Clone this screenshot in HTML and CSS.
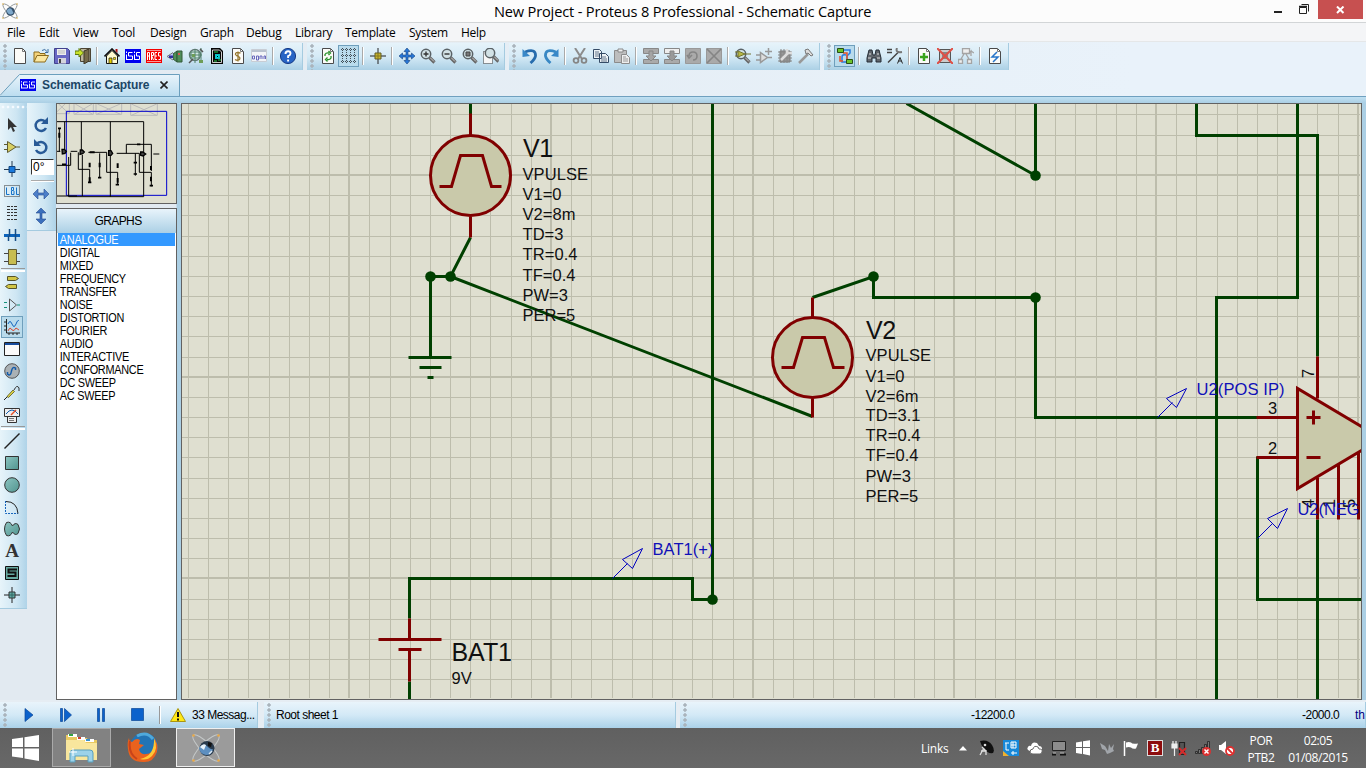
FILE: index.html
```html
<!DOCTYPE html>
<html lang="en">
<head>
<meta charset="utf-8">
<title>New Project - Proteus 8 Professional - Schematic Capture</title>
<link rel="stylesheet" href="styles.css">
</head>
<body>
<svg class="defs" width="0" height="0">
  <defs>
    <linearGradient id="tabg" x1="0" y1="0" x2="0" y2="1"><stop offset="0" stop-color="#e9f4fb"/><stop offset="1" stop-color="#b8dbef"/></linearGradient>
    <linearGradient id="teal" x1="0" y1="0" x2="1" y2="1"><stop offset="0" stop-color="#8cc5c1"/><stop offset="1" stop-color="#51948f"/></linearGradient>
    <symbol id="page" viewBox="0 0 16 16"><path d="M2.500.5h8l3 3v12h-11z" fill="#fbfbf8" stroke="#4a4a4a"/><path d="M10.500.5v3h3" fill="none" stroke="#777"/></symbol>
    <symbol id="isis" viewBox="0 0 16 14" preserveAspectRatio="none"><path d="M0 0h16v14H0z" fill="#0000f0"/><path d="M1.500 5.500v5.500M1.500 2.500v1.500M7.500 3.500H3.500v3.500H7.500v3.500H1.500M9.500 5.500v5.500M9.500 2.500v1.500M15 3.500h-3.500v3.500H14.500v3.500H9.500" fill="none" stroke="#fff"/></symbol>
    <symbol id="lens" viewBox="0 0 16 16"><path d="M9.500 9.500L14.500 14.500" stroke="#666" stroke-width="3.200"/><path d="M10 9.500L14 13.500" stroke="#ccc"/><circle cx="6" cy="6" r="4.700" fill="#d2e2e6" stroke="#5a6266" stroke-width="1.500"/></symbol>
    <symbol id="atom" viewBox="0 0 28 28"><g fill="none" stroke="#c4c8c8" stroke-width="1"><ellipse cx="14" cy="14" rx="18" ry="5" transform="rotate(45 14 14)"/><ellipse cx="14" cy="14" rx="18" ry="5" transform="rotate(-45 14 14)"/></g><circle cx="15" cy="14.500" r="7.500" fill="#293a4c"/><path d="M7 14q4-6 8-2t6 3q-1 6-7 6-6-1-7-7" fill="#5d8fc0"/><path d="M8 13q3-4 6-2l-2 5z" fill="#e9f3fa"/><path d="M16 8l4 1-1 4-3-1z" fill="#111"/><path d="M17 20l3-3" stroke="#dce8f2" stroke-width="1.500"/><g fill="#e9a743"><circle cx="1.500" cy="1.500" r="1.300"/><circle cx="26.500" cy="1.500" r="1.300"/><circle cx="1.500" cy="26.500" r="1.300"/><circle cx="26.500" cy="26.500" r="1.300"/></g></symbol>
  </defs>
</svg>
<div class="window">
  <header class="titlebar">
    <svg class="appicon" width="16" height="16" viewBox="0 0 16 16"><g fill="none" stroke="#8d9396" stroke-width=".9"><ellipse cx="8" cy="8" rx="9.500" ry="3" transform="rotate(45 8 8)"/><ellipse cx="8" cy="8" rx="9.500" ry="3" transform="rotate(-45 8 8)"/></g><circle cx="8.500" cy="8.500" r="4.300" fill="#35506b"/><path d="M4.500 8q2-4 5-2l2 4q-4 4-7-2" fill="#7fa9cc"/><path d="M0 1h2M14 1h2M0 15h2M14 15h2" stroke="#d9b052"/></svg>
    <h1>New Project - Proteus 8 Professional - Schematic Capture</h1>
    <div class="winbtns">
      <svg width="44" height="20"><path d="M0 11h8v2H0z" fill="#222"/><path d="M27.500 4.500h7v7M25.500 7.500h7v6h-7z" fill="none" stroke="#222"/><path d="M25 6.500h8" stroke="#222" stroke-width="1.500"/></svg>
      <div class="close"><svg width="9" height="8"><path d="M1 .5l6.500 6.500M7.500.5L1 7" stroke="#fff" stroke-width="2"/></svg></div>
    </div>
  </header>
  <nav class="menu"><span>File</span><span>Edit</span><span>View</span><span>Tool</span><span>Design</span><span>Graph</span><span>Debug</span><span>Library</span><span>Template</span><span>System</span><span>Help</span></nav>

  <div class="toolbars">
    <div class="group first">
      <b><svg viewBox="0 0 16 16"><use href="#page"/></svg></b>
      <b><svg viewBox="0 0 16 16"><path d="M1 14V4h5l1 1.500h5V8" fill="#f4d37a" stroke="#8b6a1c"/><path d="M1 14l3-6.500h11.500L12 14z" fill="#fbe7a0" stroke="#8b6a1c"/><path d="M9 2.500q3-2.500 5 1M15 1v3.500h-3" fill="none" stroke="#3c6ca0"/></svg></b>
      <b><svg viewBox="0 0 16 16"><path d="M.5.5h13l2 2v13H.5z" fill="#6868c4" stroke="#42428e"/><path d="M3 1h9v6H3z" fill="#eee"/><path d="M4 10h8v5.500H4z" fill="#d5d5dd"/><path d="M5 11h2v4H5z" fill="#444"/><path d="M4 3h7M4 5h7" stroke="#bbb"/></svg></b>
      <b><svg viewBox="0 0 16 16"><path d="M5.500.5h10v13h-10z" fill="#bdb7a0" stroke="#4c4535"/><path d="M9 3l5-2v12l-5 3z" fill="#74694a" stroke="#3d3728"/><path d="M0 3h4V.5L8.500 5 4 9V6.500H0z" fill="#c8e22b" stroke="#5f7a11"/></svg></b>
      <i></i>
      <b><svg viewBox="0 0 16 16"><path d="M2.500 8v7.500h11V8L8 2.500z" fill="#fffbd0" stroke="#111"/><path d="M.5 8.500L8 1l7.500 7.500" fill="none" stroke="#111" stroke-width="1.600"/><path d="M11.500 1h2v4l-2-2z" fill="#b01010"/><path d="M5 10h3v5.500H5z" fill="#e5d000" stroke="#111" stroke-width=".7"/><path d="M9.500 9.500h2v2h-2z" fill="#ed0" stroke="#111" stroke-width=".5"/></svg></b>
      <b><svg viewBox="0 0 16 16"><use href="#isis" y="1" width="16" height="14"/></svg></b>
      <b><svg viewBox="0 0 16 16"><path d="M0 1h16v14H0z" fill="#f40000"/><path d="M1.500 12V4.500h2V12M1.500 8h2M5.500 12V4.500h2v3h-2l2 4.500M11 4.500H9v7h2M9 8h2M14.500 4.500h-2v3.500h2v3.500h-2" fill="none" stroke="#fff"/><path d="M1 2.500h14M1 13.500h14" stroke="#fff" stroke-width=".6"/></svg></b>
      <b><svg viewBox="0 0 16 16"><path d="M6 6l4-3v11l-4-3z" fill="#508f58" stroke="#315939"/><path d="M10 3h5v11h-5z" fill="#4f8d59" stroke="#325b38"/><path d="M11 5h2v2h-2z" fill="#d55"/><path d="M6 4.500L0 8.500 6 12" fill="#c0c8ff" stroke="#777"/><path d="M2 7.500h4v2.500H2z" fill="#3030a0"/></svg></b>
      <b><svg viewBox="0 0 16 16"><circle cx="7" cy="7" r="5.500" fill="#d4e9e5" stroke="#607672" stroke-width="1.400"/><path d="M7 1v14M1 7h13M13 0v15M3 4h8v6H3z" fill="none" stroke="#51826c"/><path d="M4 6h3v3H4zM11 12h4v3h-4z" fill="#6d9d57"/><path d="M1 15l4-4M12 1l3 3" stroke="#555" stroke-width="1.500"/></svg></b>
      <b><svg viewBox="0 0 16 16"><path d="M2 0h9l3 3v13H2z" fill="#050505"/><path d="M3.500 2v12.500h9V4l-2-2z" fill="none" stroke="#fff" stroke-width=".8"/><path d="M5 4h4M9 12h3M5 13h3" stroke="#28d34f"/><path d="M6 6h5v5H6z" fill="#12bbc4"/><path d="M7.500 7.500h2v2h-2z" fill="#000" stroke="#0dd"/></svg></b>
      <b><svg viewBox="0 0 16 16"><use href="#page"/><path d="M10.500 5Q5 3.500 5.500 6.500q1 1.500 3 2 2 1 1 3-2 1.500-4.500 0M8 3.500v10" stroke="#987a31" fill="none" stroke-width="1.300"/></svg></b>
      <b><svg viewBox="0 0 16 16"><path d="M.5 1.500h15v12H.5z" fill="#f2f4f7" stroke="#c8cdd4"/><path d="M1 2h14v2H1z" fill="#b9c2cf"/><path d="M1.500 8h2v3h-2zM5.500 8h2v4h-2zM9 11V8h2v3M13 11V8h1.500v3" fill="none" stroke="#6969bd"/></svg></b>
      <i></i>
      <b><svg viewBox="0 0 16 16"><circle cx="8" cy="8" r="7.600" fill="#2764c5" stroke="#173b86"/><path d="M5.500 6q0-2.700 2.600-2.700 2.400 0 2.400 2.200 0 1.600-2.400 2.700V10M8.100 11.500v2" fill="none" stroke="#fff" stroke-width="1.900"/></svg></b>
    </div>
    <div class="group">
      <b><svg viewBox="0 0 16 16"><use href="#page"/><path d="M5 8V6.500q1-2 4-1.500M8.500 3l2 2-2 2M11 8v2q-1 2-4 1.500M7.500 9.500l-2 2 2 2" fill="none" stroke="#29922c" stroke-width="1.300"/></svg></b>
      <b class="on"><svg viewBox="0 0 16 16"><path d="M1.500 0v16M5.500 0v16M9.500 0v16M13.500 0v16M0 1.500h16M0 7.500h16M0 13.500h16" stroke="#424d55" stroke-dasharray="1 1"/></svg></b><i></i>
      <b><svg viewBox="0 0 16 16"><path d="M8 0v16M0 8h16" stroke="#222"/><path d="M5 5h6v6H5z" fill="#c9b72c" stroke="#625c25"/><path d="M8 5v6M5 8h6" stroke="#857823"/></svg></b><i></i>
      <b><svg viewBox="0 0 16 16"><path d="M8 0l3 3.500H9V7h3.500V5L16 8l-3.500 3V9H9v3.500h2L8 16l-3-3.500h2V9H3.500v2L0 8l3.500-3v2H7V3.500H5z" fill="#2877d7" stroke="#16427d" stroke-width=".6"/></svg></b>
      <b><svg viewBox="0 0 16 16"><use href="#lens"/><path d="M3.500 6h5M6 3.500v5" stroke="#333" stroke-width="1.400"/></svg></b>
      <b><svg viewBox="0 0 16 16"><use href="#lens"/><path d="M3.500 6h5" stroke="#333" stroke-width="1.400"/></svg></b>
      <b><svg viewBox="0 0 16 16"><use href="#lens"/><path d="M4 4h4v4H4z" fill="#777" stroke="#444"/></svg></b>
      <b><svg viewBox="0 0 16 16"><path d="M.5 3.500h9v12h-9z" fill="#f7f7f7" stroke="#333" stroke-dasharray="1 1"/><use href="#lens" x="1" y="-1" width="16" height="16"/></svg></b>
    </div>
    <div class="group">
      <b><svg viewBox="0 0 16 16"><path d="M3 4q11-4 10.500 4-.5 3-5 7" fill="none" stroke="#276cad" stroke-width="2.800"/><path d="M.5 1v8L8 8z" fill="#3988c8"/></svg></b>
      <b><svg viewBox="0 0 16 16"><path d="M13 4Q2 0 2.500 8q.5 3 5 7" fill="none" stroke="#3988c4" stroke-width="2.800"/><path d="M15.500 1v8L8 8z" fill="#3988c8"/></svg></b><i></i>
      <b><svg viewBox="0 0 16 16"><path d="M3 0l7 11M13 0L6 11" stroke="#8c8c8c" stroke-width="2"/><circle cx="4" cy="12.500" r="2.400" fill="none" stroke="#858585" stroke-width="1.800"/><circle cx="12" cy="12.500" r="2.400" fill="none" stroke="#858585" stroke-width="1.800"/></svg></b>
      <b><svg viewBox="0 0 16 16"><path d="M.5 1.500h6l2 2v7h-8zM6.500 5.500h6l3 3v6h-9z" fill="#edf2f5" stroke="#344b66"/><path d="M2 4h4M2 6h4M2 8h4M8 9h5M8 11h6M8 13h6" stroke="#67798d"/></svg></b>
      <b><svg viewBox="0 0 16 16"><path d="M.5 2.500h12v12H.5z" fill="#bdbdbd" stroke="#8b8b8b"/><path d="M4 1h5v3H4z" fill="#eee" stroke="#888"/><path d="M7.500 6.500h5l3 3v6h-8z" fill="#eee" stroke="#8c8c8c"/><path d="M9 9h3M9 11h5M9 13h5" stroke="#999"/></svg></b><i></i>
      <b><svg viewBox="0 0 16 16"><path d="M.5.500h15v5H.5zM.5 11.500h15v4H.5z" fill="#aaa" stroke="#888"/><path d="M6 3h4v5h3l-5 5-5-5h3z" fill="#a5a5a5" stroke="#888"/></svg></b>
      <b><svg viewBox="0 0 16 16"><path d="M.5.500h15v5H.5z" fill="#eee" stroke="#888"/><path d="M.5 11.500h15v4H.5z" fill="#aaa" stroke="#888"/><path d="M6 3h4v5h3l-5 5-5-5h3z" fill="#999" stroke="#888"/></svg></b>
      <b><svg viewBox="0 0 16 16"><path d="M.5.500h15v15H.5z" fill="#aaa" stroke="#999"/><path d="M4 8q0-4 4-4t4 4-4 4M2 7l2 3 3-3" fill="none" stroke="#858585" stroke-width="1.600"/></svg></b>
      <b><svg viewBox="0 0 16 16"><path d="M.5.500h15v15H.5z" fill="#aaa" stroke="#999"/><path d="M1 1l14 14M15 1L1 15" stroke="#858585" stroke-width="1.600"/></svg></b><i></i>
      <b><svg viewBox="0 0 16 16"><use href="#lens"/><path d="M3 3l7 3-7 3zM0 4h3M0 8h3M10 6h6" fill="#b9b944" stroke="#72752f"/></svg></b>
      <b><svg viewBox="0 0 16 16"><path d="M4.500 4.500l7 5-7 5zM0 7h4M0 12h4M11 9.500h5M12.500 0v7M9 3.500h7" fill="#ddd" stroke="#999" stroke-width="1.500"/></svg></b>
      <b><svg viewBox="0 0 16 16"><path d="M3 3h10v11H3z" fill="#999" stroke="#777"/><path d="M4 1v14M7 1v14M10 1v14M1 4h14M1 7h14M1 10h14M1 13h14" stroke="#888"/><path d="M4 12l8-8M10 1v4h5" stroke="#ddd" stroke-width="2.500" fill="none"/></svg></b>
      <b><svg viewBox="0 0 16 16"><path d="M1 15L10 6" stroke="#999" stroke-width="2.500"/><path d="M7 2l3-1 5 6-2 1-3-3-2 1z" fill="#ddd" stroke="#777"/></svg></b>
    </div>
    <div class="group last">
      <b class="on"><svg viewBox="0 0 16 16"><path d="M7 2h6v3L10 8v6H5V9q0-3 4-2" fill="none" stroke="#287bdc" stroke-width="1.500"/><path d="M6 5h4v8h3M3 8v5h3" fill="none" stroke="#e85128" stroke-width="1.500"/><path d="M.5.500h6v4h-6zM9.500 11.500h6v4h-6z" fill="#6bc52a" stroke="#294d15"/></svg></b><i></i>
      <b><svg viewBox="0 0 16 16"><path d="M3 2h3l1 5h2l1-5h3l2 8v4h-5v-4H6v4H1v-4z" fill="#5f656c" stroke="#252d36"/><path d="M3 6h2M11 6h2M2 10h3M11 10h3" stroke="#ddd"/></svg></b>
      <b><svg viewBox="0 0 16 16"><path d="M0 1.500h5M0 4.500h5M1 14.500L11 4.500" stroke="#444" stroke-width="1.500"/><path d="M10 0q-2 5 5 4" fill="none" stroke="#777" stroke-width="2"/><path d="M10.500 15.500l2.500-6 2.500 6M11.500 13h3" fill="none" stroke="#222"/></svg></b><i></i>
      <b><svg viewBox="0 0 16 16"><use href="#page"/><path d="M8 5v8M4 9h8" stroke="#3ba51e" stroke-width="2.500"/></svg></b>
      <b><svg viewBox="0 0 16 16"><path d="M2.500 1.500h11v13h-11z" fill="#ccc" stroke="#555"/><path d="M5 4h6v7H5z" fill="#888"/><path d="M0 0l16 16M16 0L0 16" stroke="#df5047" stroke-width="2"/></svg></b>
      <b><svg viewBox="0 0 16 16"><path d="M4.500.5h7v5h-7zM.5 11.500h4v4h-4zM9.500 11.500h4v4h-4zM3 11l3-5M11 11L8 6M13 8V3l-2 2M13 3l3 2" fill="#eee" stroke="#a4a4a4" stroke-width="1.300"/></svg></b><i></i>
      <b><svg viewBox="0 0 16 16"><use href="#page"/><path d="M10 4L5 9h6l-5 5" fill="none" stroke="#2675c9" stroke-width="1.500"/></svg></b>
    </div>
  </div>

  <div class="tabs">
    <div class="tab">
      <svg class="tabshape" width="181" height="24"><path d="M0 22.500L19.500.500H179.500V24H0z" fill="url(#tabg)"/><path d="M0 21.500L19.500.500H179.500V22" fill="none" stroke="#6b9fbd"/></svg>
      <div class="tablabel"><svg width="16" height="12"><use href="#isis" width="16" height="12"/></svg><span>Schematic Capture</span><svg width="8" height="8"><path d="M.5.5l7 7M7.500.5l-7 7" stroke="#222" stroke-width="1.600"/></svg></div>
    </div>
  </div>
  <div class="band"></div>

  <main class="work">
    <aside class="tools">
      <b><svg viewBox="0 0 16 16"><path d="M4 1v12l3-3 2 5 2-1-2-4h4z" fill="#333"/></svg></b>
      <b><svg viewBox="0 0 16 16"><path d="M3.500 2.500L12 8l-8.500 5.500zM0 5.500h3M0 10.500h3M12 8h4" fill="#d8cf62" stroke="#605c32"/></svg></b>
      <b><svg viewBox="0 0 16 16"><path d="M8 0v16M0 8.500h16" stroke="#233a50"/><path d="M5 5.500h6v6H5z" fill="#1879dc" stroke="#12447d"/></svg></b>
      <b><svg viewBox="0 0 16 16"><path d="M.5 2.500h15v11H.5z" fill="none" stroke="#333" stroke-dasharray="1 1"/><path d="M2.500 4.500v7H5.500M7.500 4.500h2v3h-2zM7.500 8v3.500h2.500V8M12.500 4.500v7H15" fill="none" stroke="#1673c8"/></svg></b>
      <b><svg viewBox="0 0 16 16"><path d="M3 1.500h11M3 4.500h11M3 7.500h11M3 10.500h11M3 14.500h11" stroke="#333" stroke-dasharray="3 1 2 1"/></svg></b>
      <b><svg viewBox="0 0 16 16"><path d="M0 8.500h16" stroke="#0c63bb" stroke-width="3"/><path d="M5.500 2v7M11.500 2v12M4.500 9v5" stroke="#164c83" stroke-width="1.500"/></svg></b>
      <b><svg viewBox="0 0 16 16"><path d="M0 4.500h4M0 12.500h4M12 4.500h4M12 12.500h4" stroke="#444"/><path d="M4.500.5h8v15h-8z" fill="#c7bd50" stroke="#5e5a36"/></svg></b>
      <i></i>
      <b><svg viewBox="0 0 16 16"><path d="M3.500 1.500h8l3 2-3 2h-8zM12.500 9.500h-8l-3 2 3 2h8z" fill="#d1c545" stroke="#56532a"/></svg></b>
      <b><svg viewBox="0 0 16 16"><path d="M0 5.500h3M0 10.500h3M13 8h3" stroke="#159078"/><path d="M5.500 2v12l7-6z" fill="none" stroke="#555"/></svg></b>
      <b class="on"><svg viewBox="0 0 16 16"><path d="M2.500 0v14H16M0 3h3M0 7h3M0 11h3M5 14v2M9 14v2M13 14v2" stroke="#222" fill="none"/><path d="M4 5q2-5 4 0t4 0 3-3" stroke="#1264bd" fill="none"/><path d="M4 12q2-5 4-1 2 2 4-2l3 2" stroke="#d84a31" fill="none"/></svg></b>
      <b><svg viewBox="0 0 16 16"><path d="M.5 1.500h15v13H.5z" fill="#fafafa" stroke="#222"/><path d="M1 3h14" stroke="#164c9e" stroke-width="2"/></svg></b>
      <b><svg viewBox="0 0 16 16"><circle cx="8" cy="8" r="7.300" fill="#aab1b5" stroke="#555"/><path d="M3.500 9v2q3 3 4-3 1-5 4-3v2" fill="none" stroke="#135cab" stroke-width="1.500"/></svg></b>
      <b><svg viewBox="0 0 16 16"><path d="M0 15l4-4" stroke="#222"/><path d="M3 11.500L9 5l1.500 1.500L4.500 12.500z" fill="#ddd542" stroke="#56532a" stroke-width=".8"/><path d="M10 5q3-6 5-2v3" fill="none" stroke="#333"/></svg></b>
      <b><svg viewBox="0 0 16 16"><path d="M.5 1.500h15v8H.5zM3.500 9.500h9v6h-9z" fill="#eee" stroke="#333"/><path d="M2 7q6-8 12 0" fill="none" stroke="#1361b0"/><path d="M7 8l5-5" stroke="#e55029" stroke-width="1.500"/><path d="M5 11.500h5M5 13.500h5" stroke="#777"/></svg></b>
      <i></i>
      <b><svg viewBox="0 0 16 16"><path d="M.5 15.500l15-15" stroke="#222" stroke-width="1.400"/></svg></b>
      <b><svg viewBox="0 0 16 16"><path d="M1.500 1.500h13v13h-13z" fill="url(#teal)" stroke="#333"/></svg></b>
      <b><svg viewBox="0 0 16 16"><circle cx="8" cy="8" r="7.300" fill="url(#teal)" stroke="#333"/></svg></b>
      <b><svg viewBox="0 0 16 16"><path d="M1.500 2v12.500H14" fill="none" stroke="#1665bd" stroke-dasharray="2 1"/><path d="M2 2.500q11 0 12 12" fill="none" stroke="#222"/></svg></b>
      <b><svg viewBox="0 0 16 16"><path d="M8.500 5q2.500-4 5.500-1.500 3 4.500 0 9-3 2.500-5.500-1.500-2 5-6 3.500-4-6.500 0-13 4-1.500 6 3.500z" fill="url(#teal)" stroke="#333"/></svg></b>
      <b class="letter">A</b>
      <b><svg viewBox="0 0 16 16"><path d="M1.500 1.500h13v13h-13z" fill="#66aaa1" stroke="#111"/><path d="M13 4.500H4.500v3H11.500v3.500H3.500" fill="none" stroke="#111" stroke-width="2"/></svg></b>
      <b><svg viewBox="0 0 16 16"><path d="M8 0v16M0 8h16" stroke="#222"/><path d="M5 5h6v6H5z" fill="#62aaa4" stroke="#333"/><path d="M8 5v6M5 8h6" stroke="#306762"/></svg></b>
    </aside>
    <aside class="rotate">
      <b><svg viewBox="0 0 16 16"><path d="M12 4.500A5.500 5.500 0 1 0 13 11" fill="none" stroke="#285a97" stroke-width="2.500"/><path d="M15 0v7H8z" fill="#285a97"/></svg></b>
      <b><svg viewBox="0 0 16 16"><path d="M4 4.500A5.500 5.500 0 1 1 3 11" fill="none" stroke="#285a97" stroke-width="2.500"/><path d="M1 0v7h7z" fill="#285a97"/></svg></b>
      <span class="angle">0°</span><i></i>
      <b class="h"><svg viewBox="0 0 16 16"><path d="M0 8l5-5v4h6V3l5 5-5 5V9H5v4z" fill="#4c7fc9" stroke="#274c91" stroke-width=".6"/></svg></b>
      <b><svg viewBox="0 0 16 16"><path d="M8 0l5 5H9v6h4l-5 5-5-5h4V5H3z" fill="#3b70bd" stroke="#274c91" stroke-width=".6"/></svg></b>
    </aside>
    <section class="side">
      <div class="overview">
        <svg width="119" height="99" viewBox="21 12 357 297" fill="none" stroke="#000" stroke-width="3">
          <g stroke="#bbb"><path d="M20 41h38V12M26 12l30 28M20 36l25-24M72 12v31h58V12M74 43l52-31M76 12l52 31M138 12v31h77V12M140 43l70-31M142 12l70 31M242 12v34h80V12M244 46l76-34M244 12l76 34"/></g>
          <path d="M49 34h301v252H49z" stroke="#00c"/>
          <path d="M21 65h260v225H56V171M21 288h60M21 196h41v-38M94 65v85M97 165v123M44 65v85M181 65v225M62 154h20M85 157v51h34v40M115 157h55v60h33v38M149 160v74M200 160h68v57h36v42M229 160v-27h75v80M256 160v67M310 162h18M21 154h10M28 85v70"/>
          <path d="M28 98v15M119 188v14M149 188v14M203 190v14M303 198v12M119 232v14M203 234v14M303 230v14M119 157h15" stroke-width="6"/>
          <path d="M36 148h7l6 6-4 6-8 2zM91 150h6l6 6-5 5-8 2zM176 152h7l5 8-5 6h-7zM272 156h6l9 6-8 6-7-2z" fill="#444" stroke-width="4"/>
          <path d="M114 247h10M144 233h10M197 254h10M251 222h10M299 257h10M24 85h9M261 133h10M36 193h12M251 188h10" stroke-width="5"/>
        </svg>
      </div>
      <div class="list"><h2>GRAPHS</h2>
        <ul><li class="sel">ANALOGUE</li><li>DIGITAL</li><li>MIXED</li><li>FREQUENCY</li><li>TRANSFER</li><li>NOISE</li><li>DISTORTION</li><li>FOURIER</li><li>AUDIO</li><li>INTERACTIVE</li><li>CONFORMANCE</li><li>DC SWEEP</li><li>AC SWEEP</li></ul>
      </div>
    </section>
    <section class="sheet">
      <svg width="1179" height="595" viewBox="182 104 1179 595">
        <g id="grid" class="grid"></g>
        <g transform="translate(.5 .5)">
          <g class="body"><circle cx="470" cy="175" r="40"/><circle cx="812" cy="357" r="40"/><path d="M1297 388v100l84-50z"/></g>
          <g class="wire">
            <path d="M470 103v11M470 237L450 276H430V357M408 357h43M419 367h22M427 377h6M450 276L812 416"/>
            <path d="M712 103V599H692V578H409V618M409 681v19"/>
            <path d="M812 297L873 276V297H1035V417H1257M906 103L1035 175V103"/>
            <path d="M1196 103V135H1317V356M1297 103V297H1216V700M1257 456V599H1362M1317 519V700"/>
          </g>
          <g class="part">
            <path d="M470 113v22M470 216v21M439 186h12L460 155h22L491 186h10M812 297v20M812 398v19M781 367h12L802 337h22L833 367h11"/>
            <path d="M409 618v21M378 639h63M398 649h23M409 649v32"/>
            <path d="M1317 356v42M1256 417h41M1256 457h41M1317 477v42M1338 464v55M1358 452v67M1306 417h14M1313 410v14M1306 457h14"/>
          </g>
          <g class="dots"><circle cx="430" cy="276" r="5.300"/><circle cx="450" cy="276" r="5.300"/><circle cx="873" cy="276" r="5.300"/><circle cx="1035" cy="297" r="5.300"/><circle cx="1035" cy="175" r="5.300"/><circle cx="712" cy="599" r="5.300"/></g>
          <path class="probe" d="M612 578l15-15M622 559l20-11-10 20zM1157 417l15-15M1166 398l20-10-10 19zM1257 538l15-15M1267 518l20-10-10 20z"/>
        </g>
        <g class="val">
          <text class="name" x="523" y="157">V1</text><text x="522.500" y="180" textLength="65.500">VPULSE</text><text x="522.500" y="200">V1=0</text><text x="522.500" y="220" textLength="53">V2=8m</text><text x="522.500" y="240" textLength="41">TD=3</text><text x="522.500" y="260" textLength="55">TR=0.4</text><text x="522.500" y="281" textLength="53">TF=0.4</text><text x="522.500" y="301">PW=3</text><text x="522.500" y="321">PER=5</text>
          <text class="name" x="866" y="339">V2</text><text x="865.500" y="361" textLength="65.500">VPULSE</text><text x="865.500" y="382">V1=0</text><text x="865.500" y="402" textLength="53">V2=6m</text><text x="865.500" y="421" textLength="55">TD=3.1</text><text x="865.500" y="441" textLength="55">TR=0.4</text><text x="865.500" y="461" textLength="53">TF=0.4</text><text x="865.500" y="482">PW=3</text><text x="865.500" y="502">PER=5</text>
          <text class="name" x="451.500" y="661" textLength="60">BAT1</text><text x="451.500" y="684">9V</text>
          <text x="1268" y="414">3</text><text x="1268" y="454">2</text>
          <text transform="translate(1314 378) rotate(-90)">7</text><text transform="translate(1314 508) rotate(-90)">4</text><text transform="translate(1335 508) rotate(-90)">1</text><text transform="translate(1355 508) rotate(-90)">5</text>
          <g class="net"><text x="652.500" y="555" textLength="61">BAT1(+)</text><text x="1196.500" y="395" textLength="88">U2(POS IP)</text><text x="1297.500" y="515" textLength="62">U2(NEG</text></g>
        </g>
      </svg>
    </section>
  </main>

  <div class="status">
    <div class="sg s1">
      <svg width="159" height="26"><g fill="#0b62cc" stroke="#0a4696" stroke-width=".7"><path d="M25 6.500v13l8-6.500zM60.500 6.500h2v13h-2zM64.500 6.500v13l7-6.500zM97.500 6.500h2v13h-2zM102.500 6.500h2v13h-2zM131.500 6.500h12v12h-12z"/></g></svg>
      <i></i>
      <svg class="warn" width="16" height="14"><path d="M8 .5L15.500 13.500H.5z" fill="#ffe817" stroke="#aa9612"/><path d="M8 4v5M8 10.500v2" stroke="#111" stroke-width="2"/></svg>
      <span>33 Messag...</span>
    </div>
    <div class="sg s2"><span>Root sheet 1</span></div>
    <div class="sg s3"><span class="cx">-12200.0</span><span class="cy">-2000.0</span><span class="th">th</span></div>
  </div>

  <footer class="taskbar">
    <div class="start"><svg width="27" height="26"><path d="M0 4l11-1.500V12H0zM12.500 2.300L27 0v12H12.500zM0 13.500h11V23L0 21.500zM12.500 13.500H27V26l-14.500-2.500z" fill="#fff"/></svg></div>
    <div class="task"><svg width="34" height="30"><path d="M1 2h10l2 3h9l1 2h9v20H1z" fill="#e9c961"/><path d="M3 1h9v3H3z" fill="#fff"/><path d="M4 1h4v2H4z" fill="#35a343"/><path d="M12 4h8v3h-8z" fill="#fff"/><path d="M13 4h3v2h-3z" fill="#d04530"/><path d="M20 6h9v3h-9z" fill="#fff"/><path d="M21 6h4v2h-4z" fill="#3b92cc"/><path d="M1 7h18l2 3h11v17H1z" fill="#f8e69d"/><path d="M5 29V20q0-3 3-3h17q3 0 3 3v9h-5v-6H10v6z" fill="#9cd2e9" stroke="#589fbd"/><path d="M8 15v8M4 19h8" stroke="#fff"/></svg></div>
    <div class="fox"><svg width="32" height="32"><circle cx="17" cy="15" r="14" fill="#2274b5"/><path d="M10 4q10-5 16 3" fill="none" stroke="#4fa9dc" stroke-width="3"/><path d="M2 6q0 3 3 4 4-5 8-2l-1 4 5 1-5 4q1 6 7 5 7 0 9-9 1-3-1-7 5 6 3 14-4 11-14 10Q2 30 1 17 0 10 2 6z" fill="#e9621e"/><path d="M27 6q5 11-2 18-5 5-12 3 15-3 14-21" fill="#ffc735"/><path d="M3 9q-2 12 7 18" stroke="#c9431a" stroke-width="2" fill="none"/></svg></div>
    <div class="task active"><svg width="28" height="28"><use href="#atom"/></svg></div>
    <div class="tray">
      <span class="links">Links</span>
      <svg class="up" width="8" height="5"><path d="M0 4.500L4 0l4 4.500z" fill="#fff"/></svg>
      <div class="icons">
        <svg viewBox="0 0 16 16"><path d="M1 1q8-2 12 4 3 5 1 8-5 1-9-4-3-4-4-8z" fill="#111"/><path d="M3 7l4 4M5 8l-4 7M7 10v5M2 11h5" fill="none" stroke="#ddd" stroke-width="1.300"/><circle cx="6" cy="5" r="1.300" fill="#ddd"/></svg>
        <svg viewBox="0 0 16 16"><path d="M0 0h16v16H0z" fill="#1688d9"/><path d="M2 3h4M3 3v7h3M8 2h5v6H8zM10 2v6M8 5h5M8 13h6M10 11v4" fill="none" stroke="#fff"/><path d="M0 11l6 5H0z" fill="#efb02c"/></svg>
        <svg viewBox="0 0 16 16"><path d="M3 11q-4-1-2-4 1-2 3-1 1-5 6-3l2 3q3 0 3 3 0 2-2 2z" fill="#fff"/><path d="M6 14q-3 0-3-2 0-3 3-3 1-4 5-2l1 2q4 0 3 3-.500 2-2 2z" fill="#fff" stroke="#666"/></svg>
        <svg viewBox="0 0 16 16"><path d="M1.500 1.500h13v9h-13z" fill="#8c8c8c" stroke="#222"/><path d="M1 14.500h4M9 14.500h6" stroke="#111" stroke-width="2"/><path d="M2 13h3M9 13h4" stroke="#bbb"/></svg>
        <svg viewBox="0 0 16 16"><path d="M1 2.500l6-1V7H1zM8 1.300l7-1V7H8zM1 8h6v6l-6-1zM8 8h7v7.500L8 14z" fill="#fff"/></svg>
        <svg viewBox="0 0 16 16"><path d="M1 3l5 3 3 5 1-7 2 4 3-4-1 5 1 2-4 2-3 1-2-4-3-1z" fill="#a1a5aa"/></svg>
        <svg viewBox="0 0 16 16"><path d="M1.500 1v15" stroke="#fff" stroke-width="1.500"/><path d="M3 2.500q3-1 5 0 1 2 7 1l-2 5q-3 1-5-1-2-1-5 0z" fill="#fff"/></svg>
        <div class="bicon">B</div>
        <svg viewBox="0 0 16 16"><path d="M1 4h5v4H1zM2 1v3M5 1v3M3.500 8v8" fill="#eee" stroke="#eee" stroke-width="1.200"/><path d="M8.500 2.500h5v12h-5z" fill="#555" stroke="#222" stroke-width="1.200"/><path d="M8 8l7 7M15 8l-7 7" stroke="#d42b2b" stroke-width="2"/></svg>
        <svg viewBox="0 0 16 16"><path d="M.5 11.500h2v2h-2zM3.500 9.500h2v4h-2zM6.500 7.500h2v6h-2zM9.500 4.500h2v9h-2zM12.500 1.500h2v12h-2z" fill="#777" stroke="#222" stroke-width=".8"/><circle cx="11.500" cy="11.500" r="4.500" fill="#dc3030"/><path d="M9.500 9.500l4 4M13.500 9.500l-4 4" stroke="#fff" stroke-width="1.500"/></svg>
        <svg viewBox="0 0 16 16"><path d="M0 5h2l5-4v13l-5-4H0z" fill="#fff"/><circle cx="11" cy="11" r="4" fill="#fff" stroke="#df3030" stroke-width="1.800"/><path d="M8 8l6 6" stroke="#df3030" stroke-width="1.800"/></svg>
      </div>
      <div class="lang"><span>POR</span><span>PTB2</span></div>
      <div class="clock"><span>02:05</span><span>01/08/2015</span></div>
    </div>
  </footer>
</div>
<script src="grid.js"></script>
</body>
</html>
```
FILE: styles.css
```css
*{box-sizing:border-box}
body{margin:0;overflow:hidden;font-family:"Liberation Sans",Arial,sans-serif;color:#000}
svg{display:block;flex:none}
b,h1,h2{font-weight:normal}
.defs{position:absolute}
.window{width:1366px;height:768px;display:flex;flex-direction:column;background:#e2eaf1}
.titlebar{height:23px;display:grid;grid-template-columns:494px 380px 1fr;background:#fcfcfc;border-bottom:1px solid #d2d5d7}
.appicon{margin:3px 0 0 2px}
.titlebar h1{margin:0;font:14.6px/23px "Open Sans",sans-serif;white-space:nowrap;letter-spacing:-.17px}
.winbtns{display:flex;margin-right:3px;justify-self:end}
.close{width:45px;height:19px;background:#c75050;display:flex;align-items:center;justify-content:center}
.menu{height:19px;background:#f4f5f7;border-bottom:1px solid #e5e7e8;padding-left:7px;display:grid;grid-template-columns:32px 34px 39px 38px 50px 46px 49px 50px 64px 52px auto;font:12px/19px "Open Sans",sans-serif;letter-spacing:-.25px}
.toolbars{height:29px;padding-top:1px;display:flex;gap:4px;background:linear-gradient(90deg,#e2eaf1,#e9f2fa 83%)}
.group{height:27px;display:flex;align-items:center;padding:0 3px 1px 10px;background:radial-gradient(circle at 5px 3px,#aab4bc 1.500px,transparent 1.800px) 0 0/10px 5px repeat-y,linear-gradient(#e6f3fa,#d5eaf6 50%,#abd0e5);border-right:1px solid #a5cbe0}
.group.first{padding-left:9px;padding-right:4px}
.group b,.tools b,.rotate b{display:flex;align-items:center;justify-content:center;flex:none}
.group b{width:21px;height:22px}
.group svg,.tools svg,.rotate svg{width:16px;height:16px}
.group i{width:8px;height:18px;background:linear-gradient(90deg,transparent 3px,#aaa 3px,#aaa 4px,#fff 4px,#fff 5px,transparent 5px)}
.group .on,.tools .on{background:#b9dbec;border:1px solid #6f9fbc}
.tabs{height:25px;padding-top:3px;background:linear-gradient(90deg,#e2eaf1,#e9f2fa 83%)}
.tab{display:grid;width:181px}
.tab>*{grid-area:1/1}
.tablabel{display:flex;align-items:center;height:22px;padding-left:20px;font-weight:bold;font-size:12px;color:#1b4666}
.tablabel span{width:118px;margin-left:6px;letter-spacing:-.08px}
.band{height:7px;background:linear-gradient(#bfe0f2,#abcfe4);border-top:1px solid #6fa0bf}
.work{height:597px;display:flex;background:linear-gradient(90deg,#e2eaf1 57px,#abcfe4 57px)}
.tools{width:27px;height:506px;padding:11px 2px 0 1px;background:radial-gradient(circle at 3px 4px,#f5faff 1.500px,transparent 1.600px) 0 0/5px 8px repeat-x,linear-gradient(90deg,#e7f4fa,#cee6f3 60%,#afd3e8);background-size:5px 8px,auto;border-bottom:1px solid #a5cbe0}
.tools b{height:22px;width:22px}
.tools i{display:block;height:4px;border-top:1px solid #999;border-bottom:2px solid #fff}
.tools .letter{font:bold 19px/22px "Liberation Serif",serif;color:#333}
.rotate{width:29px;height:128px;padding:11px 2px 0 4px;background:linear-gradient(90deg,#e7f4fa,#cee6f3 60%,#afd3e8);border-bottom:1px solid #a5cbe0}
.rotate b{height:22px;width:20px}
.rotate .h{margin-top:1px}
.angle{display:block;width:23px;height:16px;margin-top:1px;background:#fff;border:1px solid #333;border-right-color:#fff;border-bottom-color:#fff;font-size:12px;line-height:14px;padding-left:1px}
.rotate i{display:block;margin-top:5px;height:2px;background:#aaa;border-bottom:1px solid #fff}
.side{width:125px;display:flex;flex-direction:column;gap:4px;background:linear-gradient(90deg,#e2eaf1 120px,#abcfe4 121px)}
.overview{width:121px;height:101px;border:1px solid #626262;background:#dfdfd0}
.list{width:121px;height:492px;border:1px solid #626262;background:#fff;overflow:hidden}
.list h2{height:24px;margin:0;background:linear-gradient(#e8f4fb,#abd0e5);text-align:center;font-size:12px;line-height:24px;letter-spacing:-.6px;padding-left:3px}
.list ul{list-style:none;margin:0 0 0 1px;padding:0;width:129px;transform:scaleX(.907);transform-origin:0 0}
.list li{height:13px;line-height:14px;font-size:12px;letter-spacing:-.28px;padding-left:2px}
.list .sel{background:#3399ff;color:#fff}
.sheet{width:1181px;height:597px;border:1px solid #626262;background:#dfdfd0;overflow:hidden}
.grid{fill:#bdbdac;shape-rendering:crispEdges}
.body{fill:#c9c9aa;stroke:#800000;stroke-width:3}
.wire{fill:none;stroke:#004000;stroke-width:3}
.part{fill:none;stroke:#800000;stroke-width:3}
.dots{fill:#004000}
.probe{fill:none;stroke:#0000c0;stroke-width:1}
.val{font-size:16.500px;fill:#101010}
.val .name{font-size:25px;letter-spacing:-.5px}
.net{fill:#1010b8}
.status{height:28px;padding-top:2px;display:flex;background:#e6edf3;font-size:12px;letter-spacing:-.5px;white-space:nowrap}
.sg{height:26px;display:flex;align-items:center;background:radial-gradient(circle at 5px 3px,#aab4bc 1.500px,transparent 1.800px) 0 0/10px 5px repeat-y,linear-gradient(#e9f4fb,#d3e9f6 50%,#abd2e9);border-right:1px solid #a5cbe0}
.s1{width:258px;margin-right:6px;flex:none}
.s1 i{width:2px;height:18px;border-left:1px solid #999;background:#fff}
.s1 .warn{margin:0 6px 0 9px}
.s2{width:412px;padding-left:12px;margin-right:4px;flex:none}
.s3{width:686px;flex:none}
.cx{margin-left:291px;width:331px}
.cy{width:53px}
.th{color:#000080;letter-spacing:0}
.taskbar{height:40px;background:linear-gradient(#606060,#686868);display:flex;font:12px "Open Sans",sans-serif;color:#fff}
.start{width:52px;padding:7px 0 0 12px}
.task{width:59px;height:39px;display:flex;align-items:center;justify-content:center;background:#828282;border:1px solid #aaa}
.fox{width:65px;padding:4px 0 0 16px}
.task.active{background:#9b9b9b;border-color:#efefef}
.tray{margin-left:auto;width:446px;display:flex;align-items:center}
.links{width:39px;letter-spacing:-.25px;padding-left:1px}
.icons{display:grid;grid-template-columns:repeat(11,24px);margin-left:12px}
.icons svg,.bicon{width:16px;height:16px}
.bicon{background:#8c0c0d;border:1px solid #ddd;font:bold 13px/14px "Liberation Serif",serif;text-align:center}
.lang,.clock{display:flex;flex-direction:column;text-align:center;line-height:17px;letter-spacing:-.4px;flex:none;padding-top:2px}
.lang{width:28px;margin-left:4px}
.clock{width:62px;margin-left:12px}
```
FILE: grid.js
```js
// Minor lines every 20.17px, with a heavier line every tenth one.
const STEP = 20.17;
const grid = document.getElementById('grid');
function bar(x, y, w, h) {
  const r = document.createElementNS('http://www.w3.org/2000/svg', 'rect');
  r.setAttribute('x', x);
  r.setAttribute('y', y);
  r.setAttribute('width', w);
  r.setAttribute('height', h);
  grid.appendChild(r);
}
for (let i = -8; i <= 50; i++) {
  const x = Math.round(349.3 + i * STEP);
  const major = i % 10 === 0;
  bar(major ? x - 1 : x, 104, major ? 2 : 1, 594);
}
for (let i = -3; i <= 25; i++) {
  const y = Math.round(175 + i * STEP);
  const major = i % 10 === 0;
  bar(182, major ? y - 1 : y, 1178, major ? 2 : 1);
}
```
